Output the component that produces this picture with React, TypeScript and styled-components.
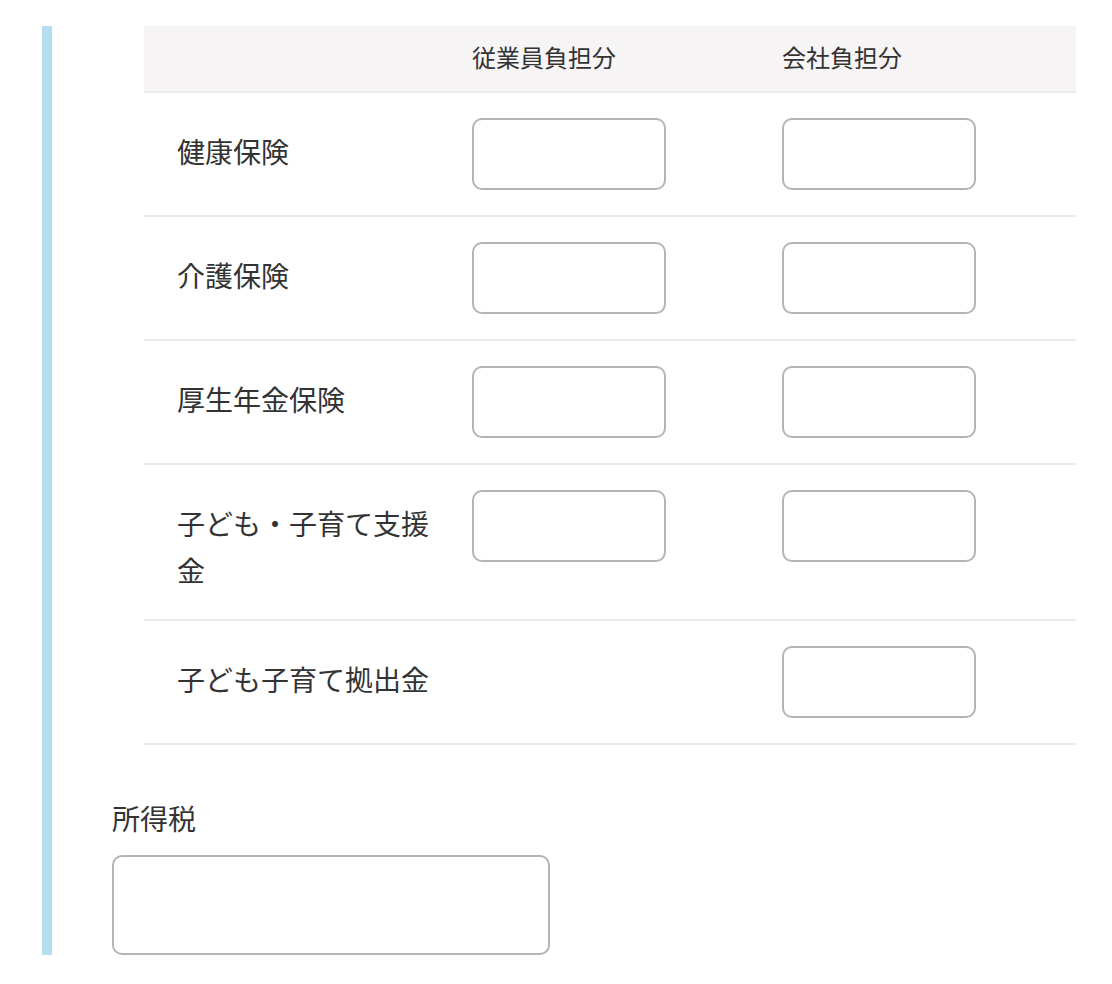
import React from "react";
import styled, { createGlobalStyle } from "styled-components";

const GlobalStyle = createGlobalStyle`
  body {
    margin: 0;
    background: #ffffff;
    font-family: "Noto Sans CJK JP", "Noto Sans", sans-serif;
    color: #333333;
  }
`;

const Page = styled.div`
  padding: 26px 0 30px 42px;
`;

const Section = styled.section`
  border-left: 10px solid #b5def0;
  padding-left: 60px;
  display: flex;
  flex-direction: column;
`;

const Table = styled.div`
  margin-left: 32px;
  width: 932px;
  display: flex;
  flex-direction: column;
`;

const Row = styled.div<{ $header?: boolean }>`
  display: grid;
  grid-template-columns: 312px 310px 310px;
  border-bottom: 2px solid #ebeaef;
  background: ${(p) => (p.$header ? "#f6f4f5" : "transparent")};
  height: ${(p) => (p.$header ? "65px" : "auto")};
  align-items: ${(p) => (p.$header ? "center" : "start")};
`;

const HeadCell = styled.div`
  padding: 0 0 4px 16px;
  font-size: 24px;
  line-height: 1.5;
`;

const Label = styled.div`
  padding: 35px 16px 25px 33px;
  font-size: 28px;
  line-height: 47px;
`;

const Cell = styled.div`
  padding: 25px 0 25px 16px;
`;

const Input = styled.input<{ $wide?: boolean }>`
  box-sizing: border-box;
  display: block;
  width: ${(p) => (p.$wide ? "438px" : "194px")};
  height: ${(p) => (p.$wide ? "100px" : "72px")};
  border: 2px solid #b4b4b4;
  border-radius: 10px;
  background: #ffffff;
  font-size: 26px;
  padding: 0 14px;
  outline: none;
`;

const Field = styled.div`
  margin-top: 50px;
  display: flex;
  flex-direction: column;
  gap: 13px;
`;

const FieldLabel = styled.label`
  font-size: 28px;
  line-height: 47px;
`;

type InsuranceRow = {
  name: string;
  employee: boolean;
};

const rows: InsuranceRow[] = [
  { name: "健康保険", employee: true },
  { name: "介護保険", employee: true },
  { name: "厚生年金保険", employee: true },
  { name: "子ども・子育て支援金", employee: true },
  { name: "子ども子育て拠出金", employee: false },
];

export default function App() {
  return (
    <>
      <GlobalStyle />
      <Page>
        <Section>
          <Table>
            <Row $header>
              <HeadCell />
              <HeadCell>従業員負担分</HeadCell>
              <HeadCell>会社負担分</HeadCell>
            </Row>
            {rows.map((row) => (
              <Row key={row.name}>
                <Label>{row.name}</Label>
                <Cell>{row.employee && <Input type="text" />}</Cell>
                <Cell>
                  <Input type="text" />
                </Cell>
              </Row>
            ))}
          </Table>
          <Field>
            <FieldLabel>所得税</FieldLabel>
            <Input type="text" $wide />
          </Field>
        </Section>
      </Page>
    </>
  );
}
